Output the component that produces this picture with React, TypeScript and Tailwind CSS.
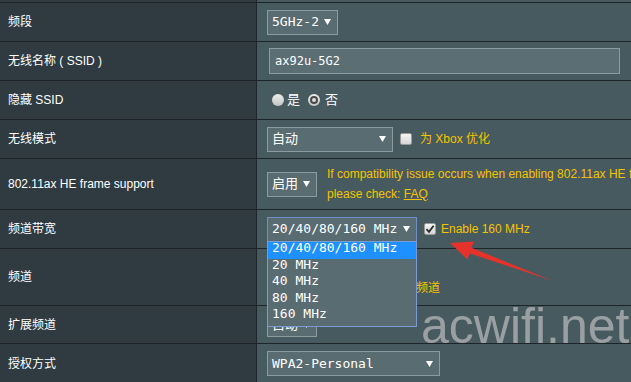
import React from "react";

const sans = { fontFamily: '"Liberation Sans", "Noto Sans CJK SC", Arial, sans-serif' };
const mono = { fontFamily: '"DejaVu Sans Mono", "Liberation Mono", "Noto Sans CJK SC", monospace' };

function Caret() {
  return (
    <svg width="7" height="6" viewBox="0 0 7 6" className="shrink-0">
      <path d="M0 0 H7 L3.5 6 Z" fill="#ffffff" />
    </svg>
  );
}

type SelectProps = { text: string; width: string; focused?: boolean };

function Select({ text, width, focused }: SelectProps) {
  return (
    <div
      className={`flex h-[25px] shrink-0 items-center justify-between border bg-[#596c72] pl-[4px] pr-[6px] text-[13px] text-white ${width} ${
        focused ? "border-[#6f8fc9]" : "border-[#8b9b9f]"
      }`}
      style={mono}
    >
      <span className="whitespace-nowrap">{text}</span>
      <Caret />
    </div>
  );
}

function Checkbox({ checked }: { checked?: boolean }) {
  return (
    <div className="flex h-[12px] w-[12px] shrink-0 items-center justify-center rounded-[2px] border border-[#9a9a9a] bg-gradient-to-b from-[#f4f4f4] to-[#d6d6d6]">
      {checked && (
        <svg width="10" height="10" viewBox="0 0 10 10">
          <path d="M1.5 5.2 L4 7.8 L8.6 1.8" stroke="#2b2b2b" strokeWidth="1.8" fill="none" />
        </svg>
      )}
    </div>
  );
}

function Radio({ checked }: { checked?: boolean }) {
  return (
    <div className="flex h-[12px] w-[12px] shrink-0 items-center justify-center rounded-full bg-gradient-to-b from-[#eeeeee] to-[#c4c4c4]">
      {checked && <div className="h-[8px] w-[8px] rounded-full border-2 border-[#4a4a4a] bg-[#dcdcdc]" />}
    </div>
  );
}

type RowProps = { label: string; height: string; last?: boolean; children?: React.ReactNode };

function Row({ label, height, last, children }: RowProps) {
  return (
    <div className={`flex ${height} ${last ? "" : "border-b border-[#1e2427]"}`}>
      <div className="flex w-[257px] shrink-0 items-center border-r border-[#1e2427] bg-[#2f3b40] pl-[8px] text-[12px] text-white">
        {label}
      </div>
      <div className="flex min-w-0 flex-1 items-center bg-[#475a5f] pl-[10px]">{children}</div>
    </div>
  );
}

const yellow = "text-[#f5c400]";

export default function App() {
  const options = ["20/40/80/160 MHz", "20 MHz", "40 MHz", "80 MHz", "160 MHz"];

  return (
    <div className="relative h-[382px] w-[631px] overflow-hidden bg-[#475a5f]" style={sans}>
      <div className="flex h-[3px] border-b border-[#1e2427]">
        <div className="w-[257px] border-r border-[#1e2427] bg-[#2f3b40]" />
        <div className="flex-1 bg-[#475a5f]" />
      </div>

      <Row label="频段" height="h-[39px]">
        <Select text="5GHz-2" width="w-[71px]" />
      </Row>

      <Row label="无线名称 ( SSID )" height="h-[39px]">
        <div
          className="ml-[2px] flex h-[26px] w-[351px] items-center border border-[#8b9b9f] bg-[#5a6e74] pl-[5px] text-[12px] text-white"
          style={mono}
        >
          ax92u-5G2
        </div>
      </Row>

      <Row label="隐藏 SSID" height="h-[39px]">
        <div className="ml-[5px] flex items-center text-[13px] text-white">
          <Radio />
          <span className="ml-[3px]">是</span>
          <div className="ml-[8px]">
            <Radio checked />
          </div>
          <span className="ml-[5px]">否</span>
        </div>
      </Row>

      <Row label="无线模式" height="h-[39px]">
        <Select text="自动" width="w-[126px]" />
        <div className="ml-[7px]">
          <Checkbox />
        </div>
        <span className={`ml-[8px] text-[12px] ${yellow}`}>为 Xbox 优化</span>
      </Row>

      <Row label="802.11ax HE frame support" height="h-[51px]">
        <Select text="启用" width="w-[50px]" />
        <div className={`ml-[10px] min-w-0 overflow-hidden whitespace-nowrap text-[12px] leading-[20px] ${yellow}`}>
          <div>If compatibility issue occurs when enabling 802.11ax HE frame support,</div>
          <div>
            please check: <span className="underline">FAQ</span>
          </div>
        </div>
      </Row>

      <Row label="频道带宽" height="h-[39px]">
        <Select text="20/40/80/160 MHz" width="w-[150px]" focused />
        <div className="ml-[7px]">
          <Checkbox checked />
        </div>
        <span className={`ml-[5px] text-[12px] ${yellow}`}>Enable 160 MHz</span>
      </Row>

      <Row label="频道" height="h-[57px]">
        <div className="flex flex-col self-start pt-[5px]">
          <Select text="自动" width="w-[50px]" />
          <div className="mt-[1px] flex items-center leading-[16px]">
            <div className="ml-[12px]">
              <Checkbox />
            </div>
            <span className={`ml-[5px] whitespace-nowrap text-[12px] ${yellow}`}>自动选择频道包括DFS频道</span>
          </div>
        </div>
      </Row>

      <Row label="扩展频道" height="h-[38px]">
        <Select text="自动" width="w-[50px]" />
      </Row>

      <Row label="授权方式" height="h-[39px]" last>
        <Select text="WPA2-Personal" width="w-[173px]" />
      </Row>

      {/* open dropdown list */}
      <div
        className="absolute left-[267px] top-[241px] w-[150px] border border-[#7b9bd3] bg-[#596c72] pb-[1px] text-[13px] text-white"
        style={mono}
      >
        {options.map((o, i) => (
          <div
            key={o}
            className={`flex h-[16.6px] items-center pb-[5px] pl-[4px] ${i === 0 ? "bg-[#1e90ff]" : ""}`}
          >
            {o}
          </div>
        ))}
      </div>

      {/* red arrow annotation */}
      <svg className="pointer-events-none absolute left-0 top-0" width="631" height="382">
        <polygon
          points="450,243 473.7,241.5 471.6,247.8 553,281 469.6,253.4 467.5,259.5"
          fill="#e5322b"
        />
      </svg>

      {/* watermark */}
      <div className="pointer-events-none absolute left-[421px] top-[301px] text-[50px] leading-none text-[#9aa0a2]" style={sans}>
        acwifi.net
      </div>
    </div>
  );
}
